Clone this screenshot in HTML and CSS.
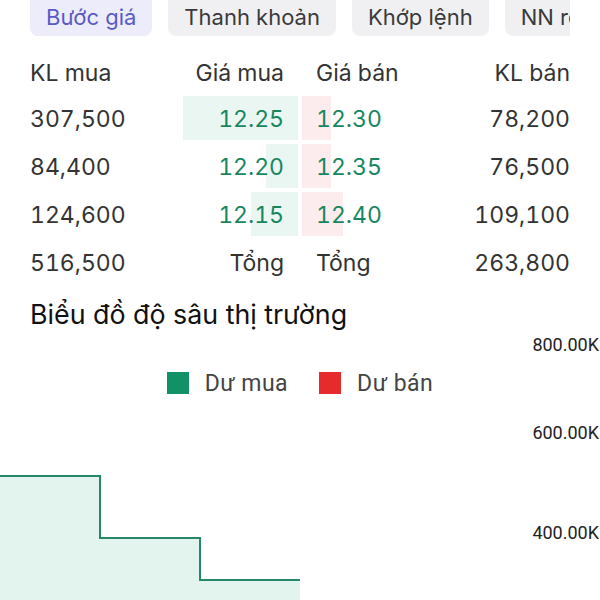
FILE: index.html
```html
<!DOCTYPE html>
<html lang="vi">
<head>
<meta charset="utf-8">
<link rel="stylesheet" href="styles.css">
</head>
<body>
<div class="page">
  <div class="tabs">
    <div class="tab active">Bước giá</div>
    <div class="tab">Thanh khoản</div>
    <div class="tab">Khớp lệnh</div>
    <div class="tab">NN ròng</div>
  </div>

  <div class="book">
    <div class="row head">
      <div class="cell vol">KL mua</div>
      <div class="cell bid">Giá mua</div>
      <div class="cell ask">Giá bán</div>
      <div class="cell vol right">KL bán</div>
    </div>
    <div class="row">
      <div class="cell vol">307,500</div>
      <div class="cell bid price"><span class="bar buy" style="width:115px"></span><span class="txt">12.25</span></div>
      <div class="cell ask price"><span class="bar sell" style="width:29px"></span><span class="txt">12.30</span></div>
      <div class="cell vol right">78,200</div>
    </div>
    <div class="row">
      <div class="cell vol">84,400</div>
      <div class="cell bid price"><span class="bar buy" style="width:32px"></span><span class="txt">12.20</span></div>
      <div class="cell ask price"><span class="bar sell" style="width:29px"></span><span class="txt">12.35</span></div>
      <div class="cell vol right">76,500</div>
    </div>
    <div class="row">
      <div class="cell vol">124,600</div>
      <div class="cell bid price"><span class="bar buy" style="width:47px"></span><span class="txt">12.15</span></div>
      <div class="cell ask price"><span class="bar sell" style="width:41px"></span><span class="txt">12.40</span></div>
      <div class="cell vol right">109,100</div>
    </div>
    <div class="row">
      <div class="cell vol">516,500</div>
      <div class="cell bid">Tổng</div>
      <div class="cell ask">Tổng</div>
      <div class="cell vol right">263,800</div>
    </div>
  </div>

  <h2 class="title">Biểu đồ độ sâu thị trường</h2>

  <div class="chart">
    <div class="legend">
      <span class="item"><span class="swatch green"></span>Dư mua</span>
      <span class="item"><span class="swatch red"></span>Dư bán</span>
    </div>
    <svg class="plot" width="600" height="265" viewBox="0 0 600 265">
      <path d="M0,141 H100 V203 H200 V245 H300 V265 H0 Z" fill="#e2f4ed"/>
      <path d="M0,141 H100 V203 H200 V245 H300" fill="none" stroke="#23896a" stroke-width="2"/>
    </svg>
    <div class="ylabel" style="top:0px">800.00K</div>
    <div class="ylabel" style="top:88px">600.00K</div>
    <div class="ylabel" style="top:188px">400.00K</div>
  </div>
</div>
</body>
</html>
```

FILE: styles.css
```css
html, body {
  margin: 0;
  padding: 0;
  background: #ffffff;
  overflow: hidden;
}

.page {
  width: 600px;
  height: 600px;
  overflow: hidden;
  padding: 0 30px;
  box-sizing: border-box;
  font-family: "Inter", "Liberation Sans", sans-serif;
  color: #333333;
}

.tabs {
  display: flex;
  gap: 16px;
  margin-top: -8px;
  margin-bottom: 14px;
  overflow: hidden;
}

.tab {
  flex-shrink: 0;
  height: 44px;
  line-height: 50px;
  padding: 0 16px;
  border-radius: 8px;
  background: #f0f0f2;
  color: #3a3a3c;
  font-size: 22px;
  white-space: nowrap;
}

.tab.active {
  background: #ececfa;
  color: #5a5ac6;
}

.book {
  display: flex;
  flex-direction: column;
}

.row {
  display: grid;
  grid-template-columns: 135px 135px 135px 135px;
  height: 48px;
  align-items: center;
  font-size: 23px;
  font-variant-numeric: tabular-nums;
}

.row.head {
  height: 44px;
}

.cell {
  position: relative;
  height: 100%;
  box-sizing: border-box;
  padding-top: 1px;
  display: flex;
  align-items: center;
  white-space: nowrap;
}

.cell.right {
  justify-content: flex-end;
}

.cell.bid {
  justify-content: flex-end;
  padding-right: 16px;
}

.cell.ask {
  padding-left: 16px;
}

.price .txt {
  position: relative;
  color: #17875f;
}

.bar {
  position: absolute;
  top: 2px;
  bottom: 2px;
}

.bar.buy {
  right: 2px;
  background: #e9f6f1;
}

.bar.sell {
  left: 2px;
  background: #fdeced;
}

.title {
  margin: 13px 0 0;
  font-size: 26.8px;
  line-height: 30px;
  font-weight: 400;
  color: #111111;
}

.chart {
  position: relative;
  margin: 6px -30px 0;
  height: 265px;
}

.legend {
  display: flex;
  justify-content: center;
  gap: 31px;
  padding-top: 37px;
  font-family: "Roboto", "Liberation Sans", sans-serif;
  font-size: 23px;
  letter-spacing: 0.5px;
  color: #444444;
}

.item {
  display: flex;
  align-items: center;
  gap: 16px;
  height: 22px;
}

.swatch {
  width: 22px;
  height: 22px;
  display: inline-block;
}

.swatch.green { background: #119166; }
.swatch.red { background: #e52b2b; }

.plot {
  position: absolute;
  left: 0;
  top: 0;
}

.ylabel {
  position: absolute;
  right: 1px;
  font-family: "Roboto", "Liberation Sans", sans-serif;
  font-size: 18px;
  line-height: 20px;
  color: #222222;
}
```
